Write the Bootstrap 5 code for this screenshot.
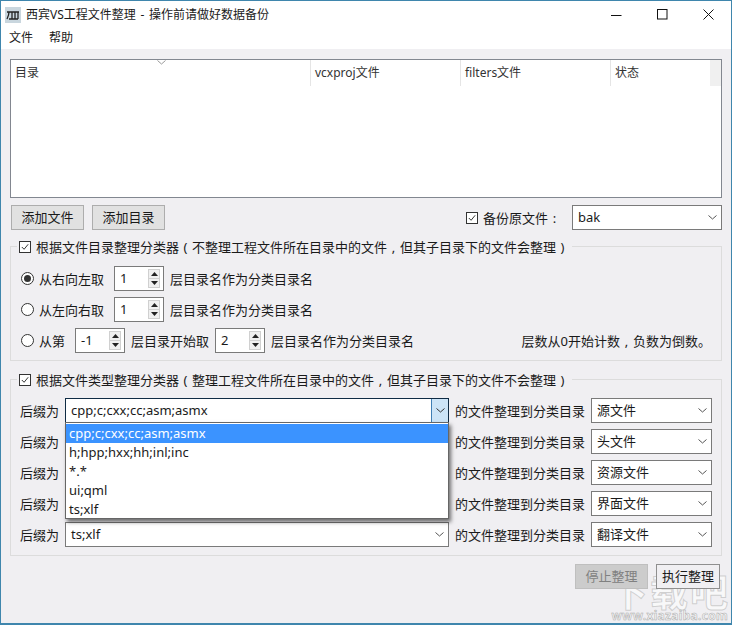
<!DOCTYPE html>
<html lang="zh-CN">
<head>
    <meta charset="UTF-8">
    <title>西宾VS工程文件整理</title>
    <link href="https://cdn.jsdelivr.net/npm/bootstrap@5.3.0/dist/css/bootstrap.min.css" rel="stylesheet">
    <style>
        html, body { height: 625px; overflow: hidden; }
        body {
            font-family: "Noto Sans", "Noto Sans CJK SC", sans-serif;
            font-size: 13px;
            line-height: 18px;
            color: #1a1a1a;
            background: #f0eff2;
        }
        .app-window { height: 625px; width: 732px; position: relative; border: 1px solid #3f86ad; border-bottom-width: 2px; }
        .title-bar { height: 29px; background: #fff; font-size: 12px; word-spacing: 1.5px; padding: 0 0 2px 4px; }
        .title-bar .app-icon { width: 16px; height: 16px; background: #c9d6de; margin-right: 5px; }
        .win-btn { width: 46px; height: 27px; }
        .menu-bar { height: 19px; background: #fff; font-size: 12px; padding: 0 0 3px 8px; gap: 16px; }
        .content-area { padding: 10px 9px 0 9px; }
        .file-table { height: 139px; background: #fff; border: 1px solid #828790; }
        .head-row { height: 26px; font-size: 12px; color: #333; }
        .head-cell { padding-left: 4px; border-right: 1px solid #e5e5e5; position: relative; height: 26px; line-height: 26px; }
        .head-cell.c1 { width: 300px; }
        .head-cell.c2 { width: 150px; }
        .head-cell.c3 { width: 150px; }
        .head-cell.c4 { width: 99px; border-right: 0; }
        .head-end { width: 11px; background: #f0f0f0; }
        .sort-mark { position: absolute; left: 146px; top: 0; }
        .tool-row { margin-top: 7px; height: 25px; padding-left: 1px; }
        .ui-btn {
            height: 25px; width: 73px; padding: 0; border: 1px solid #adadad; border-radius: 0;
            background: #e1e1e1; color: #1a1a1a; font-size: 13px; line-height: 23px;
        }
        .ui-btn:disabled { background: #ccc; border-color: #bfbfbf; color: #808080; opacity: 1; }
        .ui-btn.run-btn { width: 64px; background: #f0eff2; border-color: #8f8f8f; }
        .pun { display: inline-block; width: 13px; text-align: center; font-family: "Noto Sans", sans-serif; }
        .ui-check { width: 12px; height: 12px; border: 1px solid #333; background: #fff; flex: none; display: flex; }
        .ui-radio { width: 13px; height: 13px; border: 1px solid #333; background: #fff; border-radius: 50%; flex: none; display: flex; align-items: center; justify-content: center; }
        .ui-radio.on::after { content: ""; width: 7px; height: 7px; border-radius: 50%; background: #333; }
        .ui-select {
            height: 25px; border: 1px solid #7a7a7a; background: #fff; padding-left: 5px;
            font-size: 13px; position: relative; line-height: 23px;
        }
        .ui-select .drop { position: absolute; right: 0; top: 0; width: 17px; height: 23px; display: flex; align-items: center; justify-content: center; }
        .bak-box { width: 150px; margin-left: 11px; padding-left: 5px; }
        .backup-label { gap: 5px; }
        .spin-box { width: 50px; height: 25px; border: 1px solid #7a7a7a; background: #fff; padding-left: 5px; line-height: 23px; position: relative; flex: none; }
        .spin-arrows { position: absolute; right: 3px; top: 2px; width: 12px; height: 19px; background: #f0f0f0; border: 1px solid #d0d0d0; }
        .spin-arrows div { height: 8px; display: flex; align-items: center; justify-content: center; }
        .spin-arrows div + div { height: 9px; border-top: 1px solid #d0d0d0; }
        .group-box { border: 1px solid #dcdcdc; position: relative; }
        .group-one { height: 115px; margin-top: 16px; padding: 19px 0 0 10px; }
        .group-two { height: 177px; margin-top: 18px; padding: 18px 0 0 9px; }
        .group-title { position: absolute; left: 6px; top: -9px; background: #f0eff2; padding: 0 3px 0 2px; display: flex; align-items: center; gap: 5px; white-space: nowrap; }
        .radio-row { height: 25px; margin-bottom: 6px; }
        .radio-row .ui-radio { margin-right: 5px; }
        .radio-label { margin-right: 10px; }
        .spin-after { margin-left: 6px; }
        .spin-between { margin: 0 6px; }
        .count-note { margin-left: auto; margin-right: 10px; }
        .suffix-row { height: 25px; margin-bottom: 6px; }
        .suffix-box { width: 384px; margin: 0 6px 0 6px; }
        .suffix-box.open { border-color: #0f2b44; }
        .suffix-box.open .drop { background: #cce4f7; border-left: 1px solid #3f7fb5; height: 23px; }
        .target-box { width: 121px; margin-left: 6px; }
        .popup-list {
            position: absolute; left: 64px; top: 421px; width: 384px; height: 97px; background: #fff; padding-top: 1px;
            border: 1px solid #666; box-shadow: 2px 3px 4px rgba(0,0,0,.55); z-index: 5; line-height: 19px; font-size: 13px;
        }
        .popup-list div { height: 19px; padding-left: 3px; }
        .popup-list .picked { background: #3b93ff; color: #fff; }
        .action-row { margin-top: 8px; gap: 8px; padding-right: 2px; position: relative; z-index: 2; }
        .mark-logo {
            position: absolute; right: 1px; bottom: 14px; font-size: 38px; line-height: 38px; font-weight: 700;
            font-family: "Noto Sans CJK SC", sans-serif; letter-spacing: 2px;
            color: rgba(255,255,255,.6); -webkit-text-stroke: 1px rgba(160,160,160,.45); pointer-events: none; z-index: 1;
        }
        .mark-url {
            position: absolute; right: 3px; bottom: 0; font-size: 12px; line-height: 14px; font-weight: 700; letter-spacing: .3px;
            color: #f5f5f5; -webkit-text-stroke: .5px #aaa; z-index: 1;
        }
    </style>
</head>
<body>
<div class="app-window d-flex flex-column">
    <div class="title-bar d-flex align-items-center">
        <div class="app-icon d-flex align-items-center justify-content-center">
            <svg width="14" height="10" viewBox="0 0 14 10"><path d="M1 2h12M3 2c0 3-1 5-2 7M6 2v7M9 2v7M12 2v7M3 9h9" fill="none" stroke="#222" stroke-width="1.3"/></svg>
        </div>
        <span class="flex-grow-1">西宾VS工程文件整理 - 操作前请做好数据备份</span>
        <div class="win-btn d-flex align-items-center justify-content-center">
            <svg width="11" height="11" viewBox="0 0 11 11"><path d="M0 6.5h10.5" stroke="#111"/></svg>
        </div>
        <div class="win-btn d-flex align-items-center justify-content-center">
            <svg width="11" height="11" viewBox="0 0 11 11"><rect x=".5" y=".5" width="9.5" height="9.5" fill="none" stroke="#111"/></svg>
        </div>
        <div class="win-btn d-flex align-items-center justify-content-center">
            <svg width="11" height="11" viewBox="0 0 11 11"><path d="M.5.5l10 10M10.5.5l-10 10" stroke="#111"/></svg>
        </div>
    </div>
    <div class="menu-bar d-flex align-items-center">
        <span>文件</span>
        <span>帮助</span>
    </div>
    <div class="content-area flex-grow-1">
        <div class="file-table">
            <div class="head-row d-flex">
                <div class="head-cell c1">目录
                    <svg class="sort-mark" width="9" height="5" viewBox="0 0 9 5"><path d="M.5.5l4 3.5 4-3.5" fill="none" stroke="#999"/></svg>
                </div>
                <div class="head-cell c2">vcxproj文件</div>
                <div class="head-cell c3">filters文件</div>
                <div class="head-cell c4">状态</div>
                <div class="head-end"></div>
            </div>
        </div>

        <div class="tool-row d-flex align-items-center">
            <button type="button" class="btn ui-btn me-2">添加文件</button>
            <button type="button" class="btn ui-btn">添加目录</button>
            <div class="ms-auto d-flex align-items-center backup-label">
                <span class="ui-check"><svg width="10" height="10" viewBox="0 0 11 11"><path d="M2 5.5l2.5 2.5 4.5-5.500" fill="none" stroke="#222"/></svg></span>
                <span>备份原文件<span class="pun">:</span></span>
            </div>
            <div class="ui-select bak-box">bak
                <span class="drop"><svg width="9" height="5" viewBox="0 0 9 5"><path d="M.5.5l4 3.500 4-3.500" fill="none" stroke="#555"/></svg></span>
            </div>
        </div>

        <div class="group-box group-one">
            <div class="group-title">
                <span class="ui-check"><svg width="10" height="10" viewBox="0 0 11 11"><path d="M2 5.5l2.500 2.500 4.500-5.500" fill="none" stroke="#222"/></svg></span>
                <span>根据文件目录整理分类器<span class="pun">(</span>不整理工程文件所在目录中的文件<span class="pun">,</span>但其子目录下的文件会整理<span class="pun">)</span></span>
            </div>
            <div class="radio-row d-flex align-items-center">
                <span class="ui-radio on"></span><span class="radio-label">从右向左取</span>
                <div class="spin-box">1
                    <div class="spin-arrows"><div><svg width="7" height="4"><path d="M3.500 0L7 4H0z" fill="#222"/></svg></div><div><svg width="7" height="4"><path d="M0 0h7L3.500 4z" fill="#222"/></svg></div></div>
                </div>
                <span class="spin-after">层目录名作为分类目录名</span>
            </div>
            <div class="radio-row d-flex align-items-center">
                <span class="ui-radio"></span><span class="radio-label">从左向右取</span>
                <div class="spin-box">1
                    <div class="spin-arrows"><div><svg width="7" height="4"><path d="M3.500 0L7 4H0z" fill="#222"/></svg></div><div><svg width="7" height="4"><path d="M0 0h7L3.500 4z" fill="#222"/></svg></div></div>
                </div>
                <span class="spin-after">层目录名作为分类目录名</span>
            </div>
            <div class="radio-row d-flex align-items-center">
                <span class="ui-radio"></span><span class="radio-label">从第</span>
                <div class="spin-box">-1
                    <div class="spin-arrows"><div><svg width="7" height="4"><path d="M3.500 0L7 4H0z" fill="#222"/></svg></div><div><svg width="7" height="4"><path d="M0 0h7L3.500 4z" fill="#222"/></svg></div></div>
                </div>
                <span class="spin-between">层目录开始取</span>
                <div class="spin-box">2
                    <div class="spin-arrows"><div><svg width="7" height="4"><path d="M3.500 0L7 4H0z" fill="#222"/></svg></div><div><svg width="7" height="4"><path d="M0 0h7L3.500 4z" fill="#222"/></svg></div></div>
                </div>
                <span class="spin-after">层目录名作为分类目录名</span>
                <span class="count-note">层数从0开始计数<span class="pun">,</span>负数为倒数。</span>
            </div>
        </div>

        <div class="group-box group-two">
            <div class="group-title">
                <span class="ui-check"><svg width="10" height="10" viewBox="0 0 11 11"><path d="M2 5.5l2.500 2.500 4.500-5.500" fill="none" stroke="#222"/></svg></span>
                <span>根据文件类型整理分类器<span class="pun">(</span>整理工程文件所在目录中的文件<span class="pun">,</span>但其子目录下的文件不会整理<span class="pun">)</span></span>
            </div>
            <div class="suffix-row d-flex align-items-center">
                <span>后缀为</span>
                <div class="ui-select suffix-box open">cpp;c;cxx;cc;asm;asmx
                    <span class="drop"><svg width="9" height="5" viewBox="0 0 9 5"><path d="M.5.5l4 3.500 4-3.500" fill="none" stroke="#333"/></svg></span>
                </div>
                <span>的文件整理到分类目录</span>
                <div class="ui-select target-box">源文件
                    <span class="drop"><svg width="9" height="5" viewBox="0 0 9 5"><path d="M.5.5l4 3.500 4-3.500" fill="none" stroke="#555"/></svg></span>
                </div>
            </div>
            <div class="suffix-row d-flex align-items-center">
                <span>后缀为</span>
                <div class="ui-select suffix-box"></div>
                <span>的文件整理到分类目录</span>
                <div class="ui-select target-box">头文件
                    <span class="drop"><svg width="9" height="5" viewBox="0 0 9 5"><path d="M.5.5l4 3.500 4-3.500" fill="none" stroke="#555"/></svg></span>
                </div>
            </div>
            <div class="suffix-row d-flex align-items-center">
                <span>后缀为</span>
                <div class="ui-select suffix-box"></div>
                <span>的文件整理到分类目录</span>
                <div class="ui-select target-box">资源文件
                    <span class="drop"><svg width="9" height="5" viewBox="0 0 9 5"><path d="M.5.5l4 3.500 4-3.500" fill="none" stroke="#555"/></svg></span>
                </div>
            </div>
            <div class="suffix-row d-flex align-items-center">
                <span>后缀为</span>
                <div class="ui-select suffix-box"></div>
                <span>的文件整理到分类目录</span>
                <div class="ui-select target-box">界面文件
                    <span class="drop"><svg width="9" height="5" viewBox="0 0 9 5"><path d="M.5.5l4 3.500 4-3.500" fill="none" stroke="#555"/></svg></span>
                </div>
            </div>
            <div class="suffix-row d-flex align-items-center">
                <span>后缀为</span>
                <div class="ui-select suffix-box">ts;xlf
                    <span class="drop"><svg width="9" height="5" viewBox="0 0 9 5"><path d="M.5.5l4 3.500 4-3.500" fill="none" stroke="#555"/></svg></span>
                </div>
                <span>的文件整理到分类目录</span>
                <div class="ui-select target-box">翻译文件
                    <span class="drop"><svg width="9" height="5" viewBox="0 0 9 5"><path d="M.5.5l4 3.500 4-3.500" fill="none" stroke="#555"/></svg></span>
                </div>
            </div>
        </div>

        <div class="action-row d-flex justify-content-end">
            <button type="button" class="btn ui-btn" disabled>停止整理</button>
            <button type="button" class="btn ui-btn run-btn">执行整理</button>
        </div>
    </div>

    <div class="popup-list">
        <div class="picked">cpp;c;cxx;cc;asm;asmx</div>
        <div>h;hpp;hxx;hh;inl;inc</div>
        <div>*.*</div>
        <div>ui;qml</div>
        <div>ts;xlf</div>
    </div>

    <span class="mark-logo">下载吧</span>
    <span class="mark-url">www.xiazaiba.com</span>
</div>

<script src="https://cdn.jsdelivr.net/npm/bootstrap@5.3.0/dist/js/bootstrap.bundle.min.js"></script>
</body>
</html>
